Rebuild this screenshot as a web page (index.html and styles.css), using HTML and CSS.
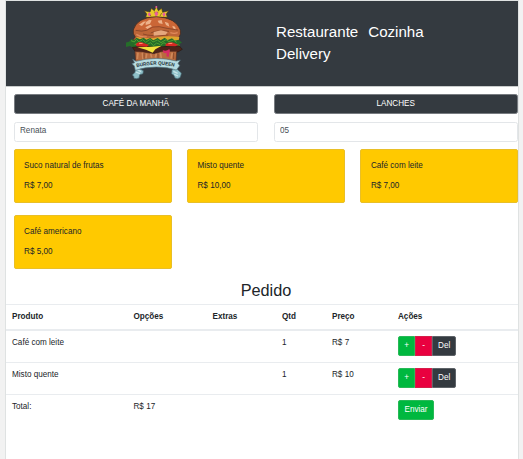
FILE: index.html
```html
<!DOCTYPE html>
<html lang="pt-BR">
<head>
<meta charset="utf-8">
<title>Burger Queen</title>
<link rel="stylesheet" href="styles.css">
</head>
<body>
<div class="page">
  <header class="header">
    <svg class="logo" viewBox="48 12 174 225" role="img" aria-label="Burger Queen">
      <path d="M107 49L110 39 103 29 120 33 124 22 133 29 139 16 145 29 155 22 158 34 176 29 169 39 172 49Z" fill="#e8c92b" stroke="#493620" stroke-width="2"/>
      <path d="M118 37l5 9M134 32l5 13 5-13M155 36l-5 9M164 38l-3 8" stroke="#6a4d17" stroke-width="2" fill="none"/>
      <path d="M139 30l6 8-6 9-6-9zM118 34l5 6-5 7-5-7zM162 34l5 6-5 7-5-7z" fill="#e85b9e"/>
      <circle cx="139" cy="18" r="3" fill="#e85b9e"/>
      <path d="M68 117L76 108Q68 99 70 87Q80 49 139 47Q199 50 211 88Q214 99 207 108L208 119Z" fill="#bd6537" stroke="#3c2219" stroke-width="2"/>
      <path d="M72 88Q84 53 139 50Q195 51 209 88L174 80 145 78 116 88 90 85Z" fill="#cb6636"/>
      <path d="M87 71l13-9 8-1-12 14zM107 64l11-8 7 2-5 10-13 4zM143 59l12-2 3 12-11-2zM164 62l11 4 3 11-10-5zM106 79l15-8 5 5-14 8zM187 74l8 3 3 9-9-4z" fill="#edb28a"/>
      <path d="M77 88q18 5 33 0 18-14 38-11 22 6 56 10M122 96q21-10 55-5M99 99q22 8 76 3" fill="none" stroke="#743822" stroke-width="2"/>
      <path d="M131 93l22-5 20 5-6 8-36 3z" fill="#e5a77d"/>
      <path d="M79 100q14 10 31 7M181 95q12 4 22 0" fill="none" stroke="#e08a5c" stroke-width="4"/>
      <path d="M80 108Q118 115 143 109T208 108L206 119 78 120Z" fill="#dda62c"/>
      <path d="M57 122l7-8 10 3 5-7 11 5 11-5 8 6 12-5 9 7 13-7 9 7 12-8 9 7 13-5 8 7 12-3 10 9-9 4 3 7-16-3-10 4-13-4-14 7-11-6-14 8-15-6-17 5-15-6-16 5-9-5-17 4 3-8-12-2z" fill="#256d29"/>
      <path d="M63 119l10 4 6-8 8 8 11-7 9 8 13-9 9 8 13-6 11 8 15-9 9 6 14-5 9 7M74 131l9-4 8 5M112 130l10-5 8 9 10-8 11 5M153 131l9-6 7 5M197 130l12 3" fill="none" stroke="#4fa030" stroke-width="3"/>
      <path d="M67 139L110 135 130 139 157 137 208 135 217 145 204 153 160 152 133 157 76 152Z" fill="#4d2319" stroke="#291912" stroke-width="2"/>
      <path d="M77 130q9-10 22-5l18 7-7 5-30-1zM167 129q13-9 27-2l11 5-9 4-29-1z" fill="#d82722"/>
      <path d="M87 128l11-1M175 128l12-1" stroke="#ff8f70" stroke-width="3"/>
      <path d="M82 139l45-2 28-3-19 11-8 10-20-9z" fill="#f4e33c"/>
      <path d="M75 151L100 153 132 158 158 151 200 151 198 181 77 181Z" fill="#b86b3e" stroke="#562b1e" stroke-width="2"/>
      <path d="M84 155l-2 19M97 155l2 20M110 158l-2 14M122 158l3 12M139 158l-3 12M151 155l3 17M187 155l-4 18" stroke="#cf895a" stroke-width="5"/>
      <path d="M102 157v16M144 158v14M191 155v19" stroke="#713922" stroke-width="2"/>
      <path d="M158 147q10 5 20-3 4 6 0 12l-2 12-7-2 1-9-9-1z" fill="#d62b64"/>
      <path d="M79 198l22 11-1 9-10 3-2 10-8 2-7-1-1-6-4-4 8-8q1-9 3-16zM196 197l-9 10-1 12 6 3 4 9 7 2 8-3 3-8 1-6-10-9z" transform="translate(-1 0)" fill="#8fc0c9" stroke="#456773" stroke-width="2"/>
      <path d="M77 213l13 5M82 206l11 6M190 211l13 6M193 220l11 5" stroke="#c7e3e7" stroke-width="4"/>
      <path d="M68 175L78 181Q138 164 199 180L211 177 204 187 209 194 199 207Q174 198 139 198Q105 198 76 208L73 195 66 188 74 185Z" fill="#b6dbe1" stroke="#567580" stroke-width="2"/>
      <path id="ribbon" d="M80 199Q139 184 197 198" fill="none"/>
      <text class="logo-text"><textPath href="#ribbon" textLength="114" lengthAdjust="spacingAndGlyphs">BURGER QUEEN</textPath></text>
    </svg>
    <nav class="nav">
      <a>Restaurante</a>
      <a>Cozinha</a>
      <a>Delivery</a>
    </nav>
  </header>

  <main>
    <div class="order-form">
      <button class="menu-button">CAFÉ DA MANHÃ</button>
      <button class="menu-button">LANCHES</button>
      <input class="field" value="Renata" aria-label="Cliente">
      <input class="field" value="05" aria-label="Mesa">
    </div>
    <section class="products">
      <article class="card"><p>Suco natural de frutas</p><p>R$ 7,00</p></article>
      <article class="card"><p>Misto quente</p><p>R$ 10,00</p></article>
      <article class="card"><p>Café com leite</p><p>R$ 7,00</p></article>
      <article class="card"><p>Café americano</p><p>R$ 5,00</p></article>
    </section>

    <h2 class="title">Pedido</h2>
    <table class="order">
      <colgroup><col class="c-product"><col class="c-options"><col class="c-extras"><col class="c-qty"><col class="c-price"><col></colgroup>
      <thead>
        <tr><th>Produto</th><th>Opções</th><th>Extras</th><th>Qtd</th><th>Preço</th><th>Ações</th></tr>
      </thead>
      <tbody>
        <tr><td>Café com leite</td><td></td><td></td><td>1</td><td>R$ 7</td>
          <td class="actions"><div class="group"><button class="btn add">+</button><button class="btn sub">-</button><button class="btn del">Del</button></div></td></tr>
        <tr><td>Misto quente</td><td></td><td></td><td>1</td><td>R$ 10</td>
          <td class="actions"><div class="group"><button class="btn add">+</button><button class="btn sub">-</button><button class="btn del">Del</button></div></td></tr>
        <tr><td>Total:</td><td>R$ 17</td><td></td><td></td><td></td>
          <td class="actions"><div class="group"><button class="btn send">Enviar</button></div></td></tr>
      </tbody>
    </table>
  </main>
</div>
</body>
</html>
```
FILE: styles.css
```css
* { box-sizing: border-box; }

body {
  margin: 0;
  padding: 0 4px 0 5px;
  background: #f2f2f2;
  color: #212529;
  font: 8.15px/12px "Liberation Sans", Arial, sans-serif;
  overflow: hidden;
}

.page {
  width: 514px;
  height: 459px;
  background: #fff;
  border: 1px solid #dfe2e2;
  border-bottom: 0;
  overflow: hidden;
}

.header {
  display: grid;
  grid-template-columns: 270px 160px;
  align-items: start;
  height: 86px;
  background: #343a40;
  border-bottom: 1px solid #c9cccc;
}

.logo {
  width: 58px;
  height: 75px;
  margin: 4px 0 0 120px;
}

.logo-text {
  font: bold 15px "Liberation Sans", Arial, sans-serif;
  fill: #263238;
}

.nav {
  display: flex;
  flex-wrap: wrap;
  column-gap: 10px;
  padding-top: 20px;
  color: #fff;
  font-size: 15.1px;
  line-height: 22px;
}

.order-form {
  display: grid;
  grid-template-columns: 244.5px 244.5px;
  gap: 8px 15.5px;
  padding: 7px 0 0 7.5px;
}

button,
input {
  margin: 0;
  font: inherit;
}

.menu-button {
  height: 20px;
  padding: 0 0 1px;
  color: #fff;
  background: #343a40;
  border: 1px solid #777b80;
  border-radius: 2.5px;
}

.field {
  width: 100%;
  height: 20px;
  padding: 0 5.5px 3px;
  color: #495057;
  background: #fff;
  border: 1px solid #e3e6e9;
  border-radius: 2.5px;
}

.products {
  display: grid;
  grid-template-columns: repeat(3, 158px);
  gap: 12px 15.4px;
  padding: 7px 0 0 7.5px;
}

.card {
  height: 54px;
  padding: 10px 9.6px 0;
  background: #ffc900;
  border: 1px solid #e9bf27;
  border-radius: 2px;
}

.card p { margin: 0 0 8px; }

.title {
  margin: 11px 0 4px;
  padding-left: 8px;
  font-size: 16.3px;
  font-weight: 400;
  line-height: 20px;
  text-align: center;
}

.order {
  width: 512px;
  table-layout: fixed;
  border-collapse: separate;
  border-spacing: 0;
}

.c-product { width: 121.5px; }
.c-options { width: 79px; }
.c-extras { width: 69.5px; }
.c-qty { width: 50px; }
.c-price { width: 66px; }

.order th,
.order td {
  padding: 6px 6px 0;
  border-top: 1px solid #e9ecef;
  text-align: left;
  vertical-align: top;
}

.order th {
  height: 27px;
  border-bottom: 2px solid #e9ecef;
}

.order td { height: 32px; }
.order td.actions { padding-top: 5px; }
.order tbody tr:first-child td { border-top: 0; height: 31px; }

.group { display: flex; }

.btn {
  height: 20px;
  padding: 0 0 1px;
  color: #fff;
  border: 1px solid;
}

.btn:first-child { border-radius: 2px 0 0 2px; }
.btn:last-child { border-radius: 0 2px 2px 0; }
.add { width: 17px; background: #00b83f; border-color: #28b957; }
.sub { width: 17px; background: #e9003f; border-color: #d51e49; }
.del { width: 24.4px; background: #343a40; border-color: #5e6368; }
.btn.send { width: 36px; background: #00b83f; border-color: #28b957; border-radius: 2px; }
```
